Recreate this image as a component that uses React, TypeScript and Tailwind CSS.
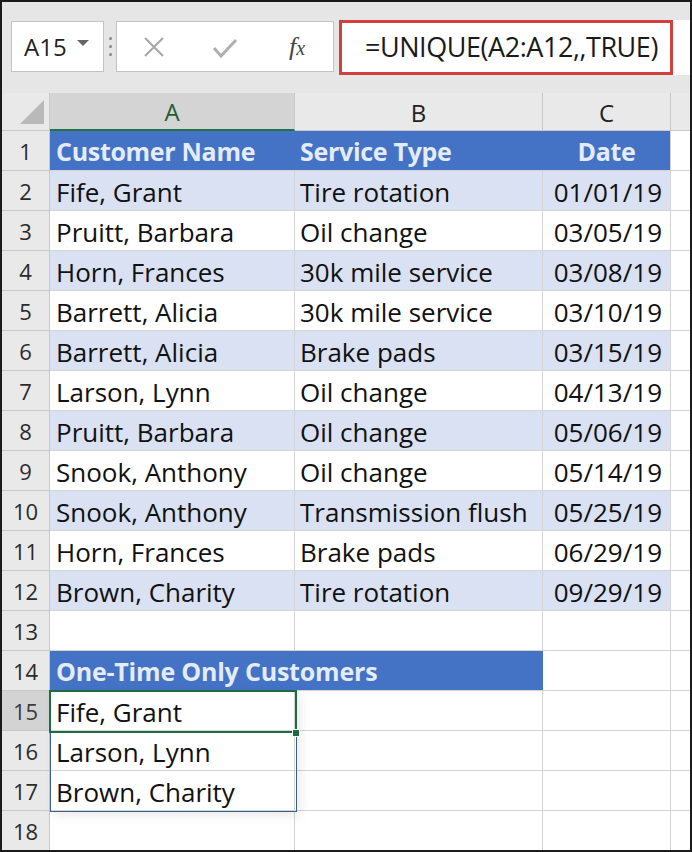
import React from 'react';

const cellFont = { fontFamily: '"Open Sans", "Noto Sans", sans-serif' };
const uiFont = { fontFamily: '"Open Sans", "Noto Sans", sans-serif' };

type Row = { a?: string; b?: string; c?: string; kind: 'head' | 'band' | 'plain' | 'empty' | 'head2' | 'spill' | 'sel' };

const rows: Row[] = [
  { a: 'Customer Name', b: 'Service Type', c: 'Date', kind: 'head' },
  { a: 'Fife, Grant', b: 'Tire rotation', c: '01/01/19', kind: 'band' },
  { a: 'Pruitt, Barbara', b: 'Oil change', c: '03/05/19', kind: 'plain' },
  { a: 'Horn, Frances', b: '30k mile service', c: '03/08/19', kind: 'band' },
  { a: 'Barrett, Alicia', b: '30k mile service', c: '03/10/19', kind: 'plain' },
  { a: 'Barrett, Alicia', b: 'Brake pads', c: '03/15/19', kind: 'band' },
  { a: 'Larson, Lynn', b: 'Oil change', c: '04/13/19', kind: 'plain' },
  { a: 'Pruitt, Barbara', b: 'Oil change', c: '05/06/19', kind: 'band' },
  { a: 'Snook, Anthony', b: 'Oil change', c: '05/14/19', kind: 'plain' },
  { a: 'Snook, Anthony', b: 'Transmission flush', c: '05/25/19', kind: 'band' },
  { a: 'Horn, Frances', b: 'Brake pads', c: '06/29/19', kind: 'plain' },
  { a: 'Brown, Charity', b: 'Tire rotation', c: '09/29/19', kind: 'band' },
  { kind: 'empty' },
  { a: 'One-Time Only Customers', kind: 'head2' },
  { a: 'Fife, Grant', kind: 'sel' },
  { a: 'Larson, Lynn', kind: 'spill' },
  { a: 'Brown, Charity', kind: 'spill' },
  { kind: 'empty' },
];

function RowHead({ n, selected }: { n: number; selected?: boolean }) {
  return (
    <div
      className={`flex h-10 items-center justify-center border-r border-b border-[#c8c8c8] pt-[2px] text-[22px] ${selected ? 'bg-[#d3d3d3] text-[#3b3b3b]' : 'bg-[#e9e9e9] text-[#2b2b2b]'}`}
      style={uiFont}
    >
      {n}
    </div>
  );
}

function TableRow({ r }: { r: Row }) {
  if (r.kind === 'head') {
    return (
      <>
        <div className="flex h-10 items-center border-b border-[#d4d4d4] bg-[#4472c4] pt-[2px] pl-[6px] text-[25px] font-bold tracking-[-0.3px] text-[#e4ecf9]" style={cellFont}>{r.a}</div>
        <div className="flex h-10 items-center border-b border-[#d4d4d4] bg-[#4472c4] pt-[2px] pl-[5px] text-[25px] font-bold tracking-[-0.3px] text-[#e4ecf9]" style={cellFont}>{r.b}</div>
        <div className="flex h-10 items-center justify-center border-r border-b border-[#d4d4d4] bg-[#4472c4] pt-[2px] text-[25px] font-bold tracking-[-0.3px] text-[#e4ecf9]" style={cellFont}>{r.c}</div>
      </>
    );
  }
  const bg = r.kind === 'band' ? 'bg-[#d9e1f2]' : 'bg-white';
  return (
    <>
      <div className={`flex h-10 items-center border-r border-b border-[#d4d4d4] ${bg} pt-[3px] pl-[6px] text-[26px] text-[#111]`} style={cellFont}>{r.a}</div>
      <div className={`flex h-10 items-center border-r border-b border-[#d4d4d4] ${bg} pt-[3px] pl-[5px] text-[26px] text-[#111]`} style={cellFont}>{r.b}</div>
      <div className={`flex h-10 items-center justify-end border-r border-b border-[#d4d4d4] ${bg} pt-[3px] pr-[8px] text-[26px] text-[#111]`} style={cellFont}>{r.c}</div>
    </>
  );
}

function LowerRow({ r }: { r: Row }) {
  const plain = 'h-10 border-r border-b border-[#d4d4d4] bg-white';
  if (r.kind === 'head2') {
    return (
      <>
        <div className="col-span-2 flex h-10 items-center border-b border-[#d4d4d4] bg-[#4472c4] pt-[2px] pl-[6px] text-[25px] font-bold tracking-[-0.2px] text-[#e4ecf9]" style={cellFont}>{r.a}</div>
        <div className={plain} />
      </>
    );
  }
  if (r.kind === 'sel' || r.kind === 'spill') {
    return (
      <>
        <div className="flex h-10 items-center border-r border-b border-[#d4d4d4] bg-white pt-[3px] pl-[6px] text-[26px] text-[#111]" style={cellFont}>
          {r.a}
        </div>
        <div className={plain} />
        <div className={plain} />
      </>
    );
  }
  return (
    <>
      <div className={plain} />
      <div className={plain} />
      <div className={plain} />
    </>
  );
}

export default function App() {
  return (
    <div className="relative h-[852px] w-[692px] overflow-hidden border-2 border-[#1b1b1b] bg-white">
      {/* formula bar */}
      <div className="flex h-[91px] items-start bg-[#e6e6e6] pt-[18px] pl-[9px]">
        <div className="mt-[1px] flex h-[51px] w-[93px] items-center border border-[#c4c4c4] bg-white pl-[12px] text-[24px] text-[#222]" style={uiFont}>
          A15
          <svg width="12" height="8" viewBox="0 0 12 8" className="ml-[10px] mb-[6px]">
            <polygon points="0,0 12,0 6,6" fill="#666" />
          </svg>
        </div>
        <div className="mt-[1px] flex h-[51px] w-[12px] flex-col items-center justify-center gap-[5px]">
          <span className="h-[3px] w-[3px] rounded-full bg-[#888]" />
          <span className="h-[3px] w-[3px] rounded-full bg-[#888]" />
          <span className="h-[3px] w-[3px] rounded-full bg-[#888]" />
        </div>
        <div className="mt-[1px] flex h-[51px] w-[218px] items-center border border-[#c4c4c4] bg-white">
          <div className="flex w-[72px] justify-center pl-[2px]">
            <svg width="22" height="22" viewBox="0 0 22 22">
              <path d="M2 2 L20 20 M20 2 L2 20" stroke="#a6a6a6" strokeWidth="2" />
            </svg>
          </div>
          <div className="flex w-[72px] justify-center pt-[3px]">
            <svg width="26" height="22" viewBox="0 0 26 22">
              <path d="M2 11 L9 19 L24 3" stroke="#b0b0b0" strokeWidth="3" fill="none" />
            </svg>
          </div>
          <div className="flex w-[72px] justify-center">
            <span className="text-[26px] italic leading-none text-[#444]" style={{ fontFamily: '"Liberation Serif", serif' }}>
              f<span className="text-[20px]">x</span>
            </span>
          </div>
        </div>
        <div className="ml-[5px] flex h-[55px] flex-1 bg-white">
          <div className="flex h-full w-[334px] items-center border-[3px] border-[#d23f3f] pl-[23px] text-[27px] tracking-[-0.45px] text-[#1a1a1a]" style={uiFont}>
            =UNIQUE(A2:A12,,TRUE)
          </div>
        </div>
      </div>

      {/* grid */}
      <div className="grid grid-cols-[48px_245px_248px_128px_19px]">
        {/* column headers */}
        <div className="relative h-[38px] border-r border-b border-[#c8c8c8] bg-[#e9e9e9]">
          <svg width="25" height="25" viewBox="0 0 25 25" className="absolute left-[18px] top-[7px]">
            <polygon points="24,0 24,24 0,24" fill="#b9b9b9" />
          </svg>
        </div>
        <div className="flex h-[38px] items-center justify-center border-r border-b-2 border-[#c8c8c8] border-b-[#217346] bg-[#d4d4d4] pt-[2px] text-[24px] text-[#1e5f36]" style={uiFont}>A</div>
        <div className="flex h-[38px] items-center justify-center border-r border-b border-[#c8c8c8] bg-[#e9e9e9] pt-[2px] text-[24px] text-[#222]" style={uiFont}>B</div>
        <div className="flex h-[38px] items-center justify-center border-r border-b border-[#c8c8c8] bg-[#e9e9e9] pt-[2px] text-[24px] text-[#222]" style={uiFont}>C</div>
        <div className="h-[38px] border-b border-[#c8c8c8] bg-[#e9e9e9]" />

        {rows.map((r, i) => (
          <React.Fragment key={i}>
            <RowHead n={i + 1} selected={i === 14} />
            {i < 12 ? <TableRow r={r} /> : <LowerRow r={r} />}
            <div className="h-10 border-b border-[#d4d4d4] bg-white" />
          </React.Fragment>
        ))}
      </div>

      {/* spill range outline and active cell */}
      <div className="pointer-events-none absolute left-[48px] top-[689px] h-[121px] w-[247px] border-[1.5px] border-[#3b5f8a] shadow-[4px_4px_10px_rgba(0,0,0,0.08)]" />
      <div className="pointer-events-none absolute left-[47px] top-[688px] h-[43px] w-[248px] border-2 border-[#1e6b41]" />
      <div className="pointer-events-none absolute left-[290px] top-[727px] h-[8px] w-[8px] border border-white bg-[#1e6b41]" />
    </div>
  );
}
